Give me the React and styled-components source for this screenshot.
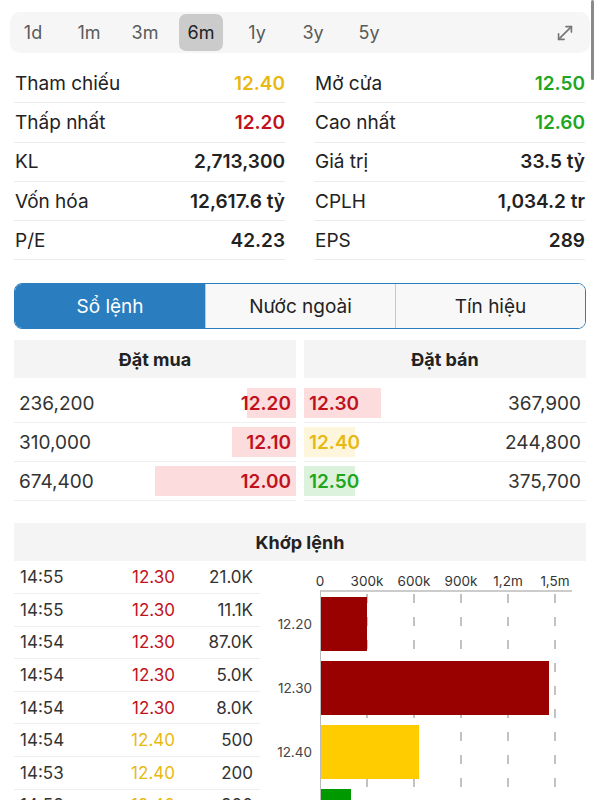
import React from 'react'
import styled, { createGlobalStyle } from 'styled-components'
import { MoveDiagonal } from 'lucide-react'

const GlobalStyle = createGlobalStyle`
  html, body {
    margin: 0;
    padding: 0;
    background: #fff;
    font-family: Inter, "Noto Sans", "Liberation Sans", sans-serif;
    color: #222;
  }
`

const RED = '#c0121c'
const YELLOW = '#e8b912'
const GREEN = '#1ea61e'

const Page = styled.div`
  position: relative;
  width: 600px;
  height: 800px;
  overflow: hidden;
  padding: 0 14px;
  box-sizing: border-box;
`

const ScrollThumb = styled.div`
  position: absolute;
  top: 0;
  right: 6px;
  width: 3px;
  height: 80px;
  border-radius: 2px;
  background: #8a8a8a;
`

const TimeBar = styled.div`
  margin: 12px -4px 0;
  height: 41px;
  background: #f6f6f6;
  border-radius: 10px;
  display: flex;
  align-items: center;
  padding: 0 14px 0 1px;
  gap: 12px;
`

const Range = styled.div`
  width: 44px;
  height: 37px;
  display: flex;
  align-items: center;
  justify-content: center;
  border-radius: 7px;
  font-size: 18px;
  color: ${p => (p.$active ? '#222' : '#5a5a5a')};
  background: ${p => (p.$active ? '#cbcbcb' : 'transparent')};
`

const Expand = styled.div`
  margin-left: auto;
  color: #777;
  display: flex;
`

const StatsGrid = styled.div`
  margin-top: 11px;
  display: grid;
  grid-template-columns: 1fr 1fr;
  column-gap: 29px;
  padding-right: 1px;
`

const StatRow = styled.div`
  height: 38.3px;
  display: flex;
  align-items: center;
  justify-content: space-between;
  border-bottom: 1px solid #ececec;
  font-size: 19px;
  padding-left: 1px;
`

const StatValue = styled.span`
  font-weight: 600;
  color: ${p => p.$color || '#222'};
`

const Tabs = styled.div`
  margin-top: 23px;
  height: 46px;
  display: grid;
  grid-template-columns: 1fr 1fr 1fr;
  border: 1.5px solid #2a7ebf;
  border-radius: 8px;
  overflow: hidden;
  box-sizing: border-box;
`

const Tab = styled.div`
  display: flex;
  align-items: center;
  justify-content: center;
  font-size: 19px;
  background: ${p => (p.$active ? '#2a7ebf' : '#f8f8f8')};
  color: ${p => (p.$active ? '#fff' : '#222')};
  & + & {
    border-left: 1px solid ${p => (p.$active ? '#2a7ebf' : '#c8c8c8')};
  }
`

const Book = styled.div`
  margin-top: 11px;
  display: grid;
  grid-template-columns: 1fr 1fr;
  column-gap: 8px;
`

const SectionHead = styled.div`
  height: 38px;
  margin-bottom: ${p => p.$gap || 0}px;
  background: #f4f4f4;
  display: flex;
  align-items: center;
  justify-content: center;
  font-size: 18px;
  font-weight: 700;
  color: #222;
`

const BookRow = styled.div`
  height: 38px;
  display: flex;
  align-items: center;
  justify-content: space-between;
  flex-direction: ${p => (p.$side === 'sell' ? 'row-reverse' : 'row')};
  border-bottom: 1px solid #eeeeee;
  font-size: 19px;
  color: #333;
`

const Vol = styled.span`
  padding: 0 5px;
`

const PriceBar = styled.span`
  height: 30px;
  display: flex;
  align-items: center;
  justify-content: ${p => (p.$side === 'sell' ? 'flex-start' : 'flex-end')};
  padding: 0 5px;
  box-sizing: border-box;
  font-weight: 600;
  color: ${p => p.$color};
  background: ${p => p.$bg};
`

const Matched = styled.div`
  margin-top: 22px;
`

const MatchBody = styled.div`
  display: grid;
  grid-template-columns: 246px 1fr;
`

const TradeRow = styled.div`
  height: 32.6px;
  display: grid;
  grid-template-columns: 1fr 70px 78px;
  align-items: center;
  border-bottom: 1px solid #eeeeee;
  font-size: 17px;
  color: #333;
  padding: 0 7px 0 6px;
  box-sizing: border-box;
`

const TradePrice = styled.span`
  text-align: right;
  color: ${p => p.$color};
`

const TradeVol = styled.span`
  text-align: right;
`

const Chart = styled.svg`
  display: block;
  font-family: Inter, "Liberation Sans", sans-serif;
`

const stats = [
  [['Tham chiếu', '12.40', YELLOW], ['Mở cửa', '12.50', GREEN]],
  [['Thấp nhất', '12.20', RED], ['Cao nhất', '12.60', GREEN]],
  [['KL', '2,713,300'], ['Giá trị', '33.5 tỷ']],
  [['Vốn hóa', '12,617.6 tỷ'], ['CPLH', '1,034.2 tr']],
  [['P/E', '42.23'], ['EPS', '289']]
]

const buys = [
  ['236,200', '12.20', 49],
  ['310,000', '12.10', 64],
  ['674,400', '12.00', 141]
]

const sells = [
  ['367,900', '12.30', 77, RED, '#fcdcdc'],
  ['244,800', '12.40', 51, YELLOW, '#fdf6dc'],
  ['375,700', '12.50', 51, GREEN, '#dcf2dc']
]

const trades = [
  ['14:55', '12.30', '21.0K', RED],
  ['14:55', '12.30', '11.1K', RED],
  ['14:54', '12.30', '87.0K', RED],
  ['14:54', '12.30', '5.0K', RED],
  ['14:54', '12.30', '8.0K', RED],
  ['14:54', '12.40', '500', YELLOW],
  ['14:53', '12.40', '200', YELLOW],
  ['14:53', '12.40', '300', YELLOW]
]

const ticks = ['0', '300k', '600k', '900k', '1,2m', '1,5m']

const volBars = [
  ['12.20', 46, '#990000'],
  ['12.30', 228, '#990000'],
  ['12.40', 98, '#ffcc00'],
  ['12.50', 30, '#009900']
]

const VolumeChart = () => (
  <Chart width="326" height="250" viewBox="0 0 326 250">
    {ticks.map((t, i) => (
      <text key={t} x={60 + i * 47} y="25" fontSize="13.5" fill="#333" textAnchor="middle">
        {t}
      </text>
    ))}
    {ticks.slice(1).map((t, i) => (
      <line key={t} x1={107 + i * 47} x2={107 + i * 47} y1="33" y2="250"
        stroke="#9a9a9a" strokeWidth="1.2" strokeDasharray="9 14" />
    ))}
    <line x1="60" x2="312" y1="30" y2="30" stroke="#bbb" strokeWidth="1.5" />
    <line x1="60.5" x2="60.5" y1="30" y2="250" stroke="#bbb" strokeWidth="1" />
    {volBars.map(([p, w, c], i) => (
      <g key={p}>
        <rect x="61" y={36 + i * 64} width={w} height="54" fill={c} />
        <text x="52" y={68 + i * 64} fontSize="13.5" fill="#444" textAnchor="end">{p}</text>
      </g>
    ))}
  </Chart>
)

const App = () => (
  <Page>
    <GlobalStyle />
    <ScrollThumb />
    <TimeBar>
      {['1d', '1m', '3m', '6m', '1y', '3y', '5y'].map(r => (
        <Range key={r} $active={r === '6m'}>{r}</Range>
      ))}
      <Expand>
        <MoveDiagonal size={22} strokeWidth={1.8} />
      </Expand>
    </TimeBar>

    <StatsGrid>
      {stats.flat().map(([label, value, color]) => (
        <StatRow key={label}>
          <span>{label}</span>
          <StatValue $color={color}>{value}</StatValue>
        </StatRow>
      ))}
    </StatsGrid>

    <Tabs>
      <Tab $active>Sổ lệnh</Tab>
      <Tab>Nước ngoài</Tab>
      <Tab>Tín hiệu</Tab>
    </Tabs>

    <Book>
      <div>
        <SectionHead $gap={6}>Đặt mua</SectionHead>
        {buys.map(([v, p, w]) => (
          <BookRow key={p}>
            <Vol>{v}</Vol>
            <PriceBar style={{ width: w }} $color={RED} $bg="#fcdcdc">{p}</PriceBar>
          </BookRow>
        ))}
      </div>
      <div>
        <SectionHead $gap={6}>Đặt bán</SectionHead>
        {sells.map(([v, p, w, c, bg]) => (
          <BookRow key={p} $side="sell">
            <Vol>{v}</Vol>
            <PriceBar style={{ width: w }} $side="sell" $color={c} $bg={bg}>{p}</PriceBar>
          </BookRow>
        ))}
      </div>
    </Book>

    <Matched>
      <SectionHead>Khớp lệnh</SectionHead>
      <MatchBody>
        <div>
          {trades.map(([t, p, v, c], i) => (
            <TradeRow key={i}>
              <span>{t}</span>
              <TradePrice $color={c}>{p}</TradePrice>
              <TradeVol>{v}</TradeVol>
            </TradeRow>
          ))}
        </div>
        <VolumeChart />
      </MatchBody>
    </Matched>
  </Page>
)

export default App
